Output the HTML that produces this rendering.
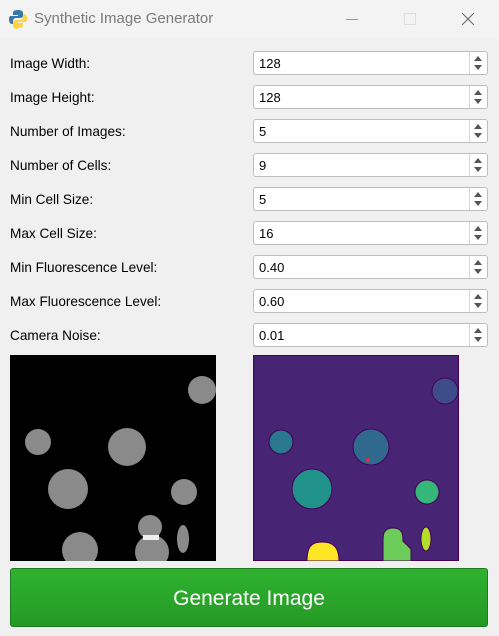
<!DOCTYPE html>
<html><head><style>
body{margin:0;width:499px;height:636px;background:#f0f0f0;font-family:"Liberation Sans","DejaVu Sans",sans-serif;position:relative;overflow:hidden}
.tb{position:absolute;left:0;top:0;width:499px;height:38px;background:#f3f3f3}
.title{position:absolute;left:34px;top:10px;font-size:15px;color:#7a7a7a}
.lbl{position:absolute;left:10px;font-size:13.6px;color:#000}
.inp{position:absolute;left:253px;width:235px;height:24px;background:#fff;border:1px solid #bdbdbd;border-radius:3px;box-sizing:border-box}
.inp span{position:absolute;left:5px;top:4px;font-size:13px}
.sp{position:absolute;right:0;top:0;width:17px;height:100%;border-left:1px solid #d8d8d8}
.sp:before{content:"";position:absolute;left:4px;top:4px;border:4px solid transparent;border-bottom:5px solid #555;border-top:0}
.sp:after{content:"";position:absolute;left:4px;bottom:4px;border:4px solid transparent;border-top:5px solid #555;border-bottom:0}
.btn{position:absolute;left:10px;top:568px;width:478px;height:59px;box-sizing:border-box;border:1px solid #1f7a1f;border-radius:3px;background:linear-gradient(#2fb22f,#259a25);color:#fff;font-size:21px;text-align:center;line-height:59px}
</style></head><body>
<div class="tb">
<svg style="position:absolute;left:8px;top:9px" width="20" height="20" viewBox="0 0 20 20"><path d="M10 1C5 1 5 3 5 4v2h5v1H3C1 7 1 9 1 11s1 4 3 4h1v-3c0-2 2-3 3-3h4c2 0 3-1 3-3V4c0-2-2-3-5-3z" fill="#3b77a8"/><path d="M10 19c5 0 5-2 5-3v-2h-5v-1h7c2 0 2-2 2-4s-1-4-3-4h-1v3c0 2-2 3-3 3H8c-2 0-3 1-3 3v3c0 2 2 3 5 3z" fill="#fdd443"/></svg>
<div class="title">Synthetic Image Generator</div>
<div style="position:absolute;left:346px;top:19px;width:12px;height:1px;background:#999"></div>
<div style="position:absolute;left:404px;top:13px;width:10px;height:10px;border:1px solid #ddd"></div>
<svg style="position:absolute;left:462px;top:13px" width="12" height="12"><path d="M0 0L12 12M12 0L0 12" stroke="#666" stroke-width="1"/></svg>
</div>
<div class="lbl" style="top:56px">Image Width:</div><div class="inp" style="top:51px"><span>128</span><div class="sp"></div></div>
<div class="lbl" style="top:90px">Image Height:</div><div class="inp" style="top:85px"><span>128</span><div class="sp"></div></div>
<div class="lbl" style="top:124px">Number of Images:</div><div class="inp" style="top:119px"><span>5</span><div class="sp"></div></div>
<div class="lbl" style="top:158px">Number of Cells:</div><div class="inp" style="top:153px"><span>9</span><div class="sp"></div></div>
<div class="lbl" style="top:192px">Min Cell Size:</div><div class="inp" style="top:187px"><span>5</span><div class="sp"></div></div>
<div class="lbl" style="top:226px">Max Cell Size:</div><div class="inp" style="top:221px"><span>16</span><div class="sp"></div></div>
<div class="lbl" style="top:260px">Min Fluorescence Level:</div><div class="inp" style="top:255px"><span>0.40</span><div class="sp"></div></div>
<div class="lbl" style="top:294px">Max Fluorescence Level:</div><div class="inp" style="top:289px"><span>0.60</span><div class="sp"></div></div>
<div class="lbl" style="top:328px">Camera Noise:</div><div class="inp" style="top:323px"><span>0.01</span><div class="sp"></div></div>
<svg style="position:absolute;left:0;top:0" width="499" height="636">
<defs><clipPath id="a"><rect x="10" y="355" width="206" height="206"/></clipPath><clipPath id="b"><rect x="253" y="355" width="206" height="206"/></clipPath></defs>
<rect x="10" y="355" width="206" height="206" fill="#000"/>
<g clip-path="url(#a)" fill="#8a8a8a">
<circle cx="202" cy="390" r="14"/><circle cx="38" cy="442" r="13"/><circle cx="127" cy="447" r="19"/><circle cx="68" cy="489" r="20"/><circle cx="184" cy="492" r="13"/><circle cx="150" cy="527" r="12"/><circle cx="152" cy="552" r="17"/><ellipse cx="183" cy="539" rx="6" ry="14"/><circle cx="80" cy="550" r="18"/><rect x="143" y="535" width="16" height="5" fill="#eee"/>
</g>
<rect x="253.5" y="355.5" width="205" height="205" fill="#482475" stroke="#440154"/>
<g clip-path="url(#b)" stroke="#440154">
<circle cx="445" cy="391" r="13" fill="#3e4c8a"/><circle cx="281" cy="442" r="12" fill="#2a788e"/><circle cx="371" cy="447" r="18" fill="#31688e"/><circle cx="312" cy="489" r="20" fill="#21918c"/><circle cx="427" cy="492" r="12" fill="#35b779"/>
<path d="M383 561v-20c0-6 0-13 10-13s10 7 10 13l8 8v12z" fill="#6ccd5a"/><ellipse cx="426" cy="539" rx="5" ry="12" fill="#b5de2b"/><path d="M307 561c0-15 5-19 15-19s17 4 17 19z" fill="#fde725"/>
<circle cx="368" cy="460" r="2" fill="#e03030" stroke="none"/>
</g>
</svg>
<div class="btn">Generate Image</div>
</body></html>
